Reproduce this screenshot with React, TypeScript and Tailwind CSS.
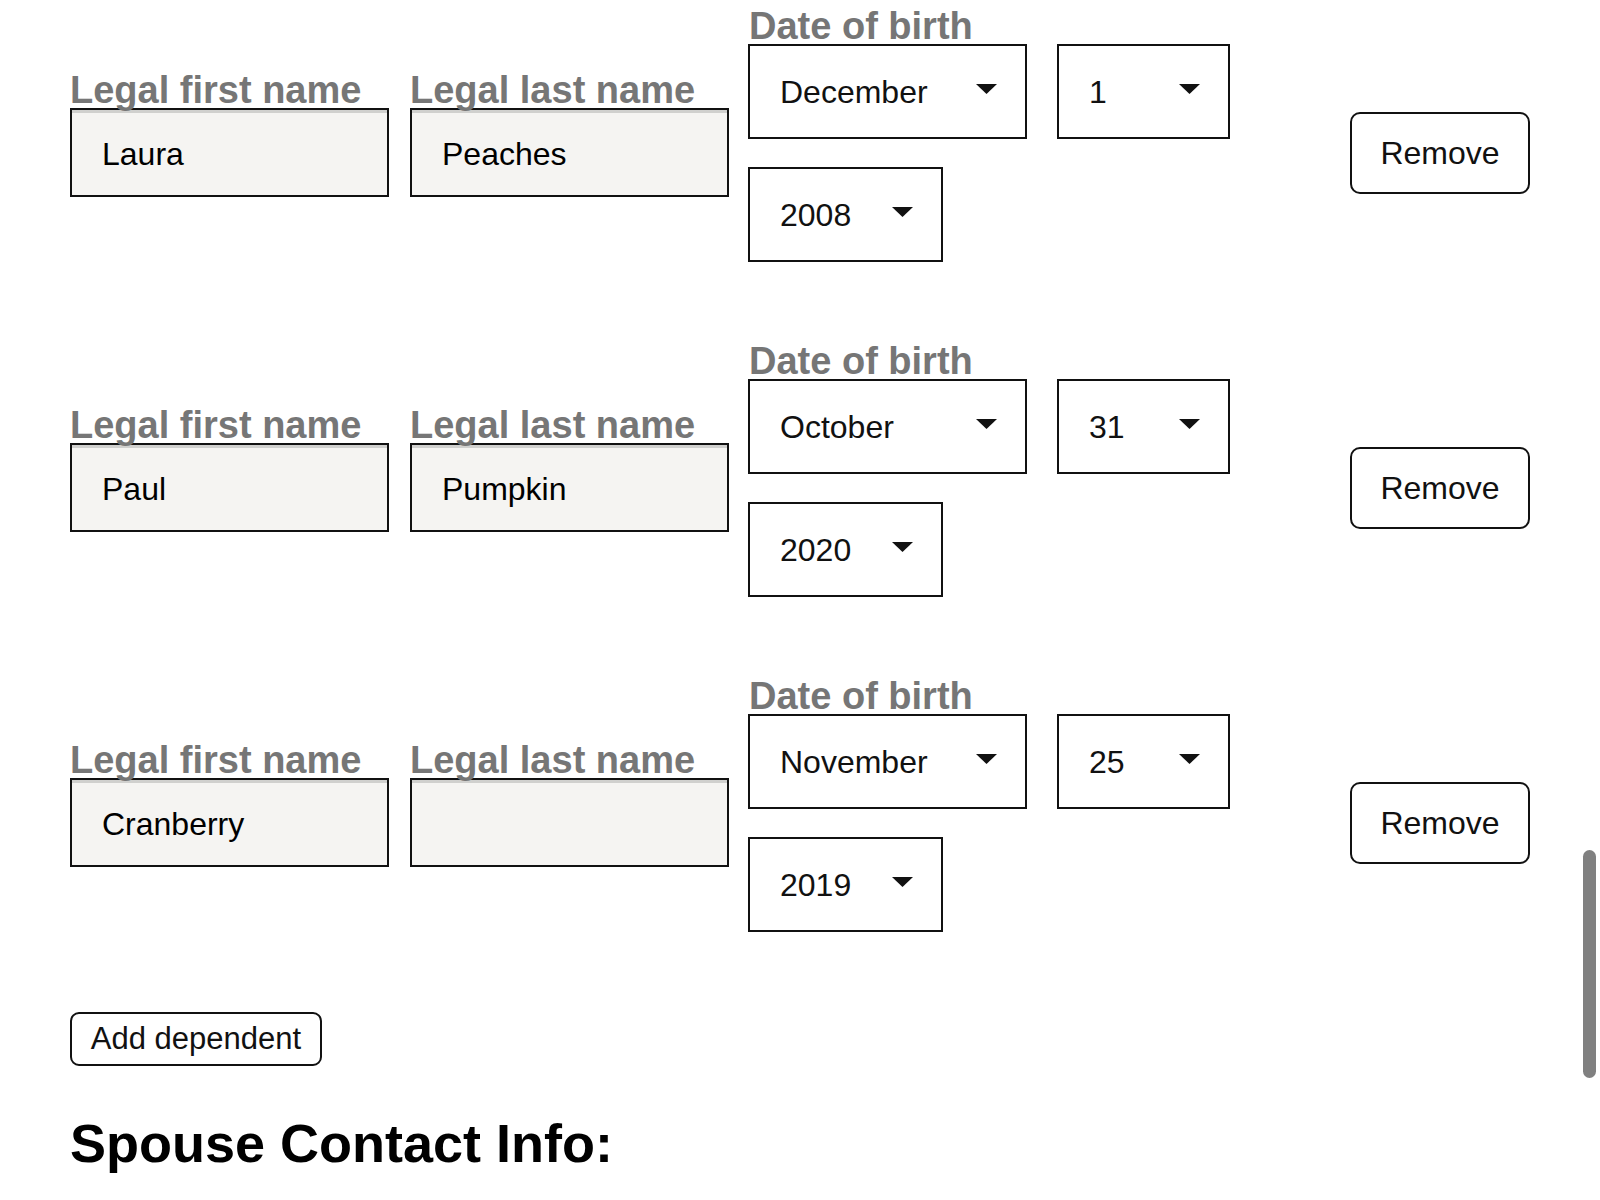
import React from "react";

type Dependent = {
  first: string;
  last: string;
  month: string;
  day: string;
  year: string;
};

const dependents: Dependent[] = [
  { first: "Laura", last: "Peaches", month: "December", day: "1", year: "2008" },
  { first: "Paul", last: "Pumpkin", month: "October", day: "31", year: "2020" },
  { first: "Cranberry", last: "", month: "November", day: "25", year: "2019" },
];

const months = [
  "January",
  "February",
  "March",
  "April",
  "May",
  "June",
  "July",
  "August",
  "September",
  "October",
  "November",
  "December",
];

function Caret() {
  return (
    <svg width="21" height="10" viewBox="0 0 21 10" aria-hidden="true">
      <path d="M0 0H21L10.5 10Z" fill="#111111" />
    </svg>
  );
}

function SelectBox({
  value,
  options,
  widthClass,
}: {
  value: string;
  options: string[];
  widthClass: string;
}) {
  return (
    <div className={"relative shrink-0 " + widthClass}>
      <select
        value={value}
        onChange={() => {}}
        className="h-[95px] w-full appearance-none rounded-none border-2 border-[#111111] bg-white pl-[30px] pr-[60px] text-[32px] text-[#111111] outline-none"
      >
        {options.map((o) => (
          <option key={o} value={o}>
            {o}
          </option>
        ))}
      </select>
      <div className="pointer-events-none absolute right-[30px] top-[40px] flex">
        <Caret />
      </div>
    </div>
  );
}

function NameField({ label, value, className }: { label: string; value: string; className: string }) {
  return (
    <div className={"mt-[64px] w-[319px] shrink-0 " + className}>
      <div className="text-[38px] font-bold leading-none text-[#767676]">{label}</div>
      <input
        readOnly
        value={value}
        className="-mt-px block h-[89px] w-full rounded-none border-2 border-[#111111] bg-[#f5f4f2] pl-[30px] pt-[4px] text-[32px] text-black shadow-[inset_0_3px_0_#d0d0ce] outline-none"
      />
    </div>
  );
}

function DependentRow({ d }: { d: Dependent }) {
  const days = Array.from({ length: 31 }, (_, i) => String(i + 1));
  const years = Array.from({ length: 30 }, (_, i) => String(2024 - i));
  return (
    <div className="flex items-start">
      <NameField label="Legal first name" value={d.first} className="" />
      <NameField label="Legal last name" value={d.last} className="ml-[21px]" />
      <div className="ml-[19px] min-w-0 flex-1">
        <div className="ml-[1px] text-[38px] font-bold leading-none text-[#767676]">Date of birth</div>
        <div className="-mt-px flex flex-wrap gap-x-[30px] gap-y-[28px]">
          <SelectBox value={d.month} options={months} widthClass="w-[279px]" />
          <SelectBox value={d.day} options={days} widthClass="w-[173px]" />
          <SelectBox value={d.year} options={years} widthClass="w-[195px]" />
        </div>
      </div>
      <button
        type="button"
        className="mt-[105px] h-[82px] w-[180px] shrink-0 rounded-[10px] border-2 border-[#111111] bg-white text-[32px] text-[#111111]"
      >
        Remove
      </button>
    </div>
  );
}

export default function App() {
  return (
    <div className="relative h-[1200px] w-full overflow-hidden bg-white font-['Liberation_Sans',Arial,sans-serif] text-black">
      <div className="pl-[70px] pr-[70px] pt-[7px]">
        <div className="flex flex-col gap-[80px]">
          {dependents.map((d, i) => (
            <DependentRow key={i} d={d} />
          ))}
        </div>
        <button
          type="button"
          className="mt-[80px] block h-[54px] w-[252px] rounded-[9px] border-2 border-[#111111] bg-white text-[31px] text-[#111111]"
        >
          Add dependent
        </button>
        <h2 className="mt-[50px] text-[54px] font-bold leading-none text-black">Spouse Contact Info:</h2>
      </div>
      <div className="absolute right-[4px] top-[850px] h-[228px] w-[13px] rounded-full bg-[#808080]" />
    </div>
  );
}
